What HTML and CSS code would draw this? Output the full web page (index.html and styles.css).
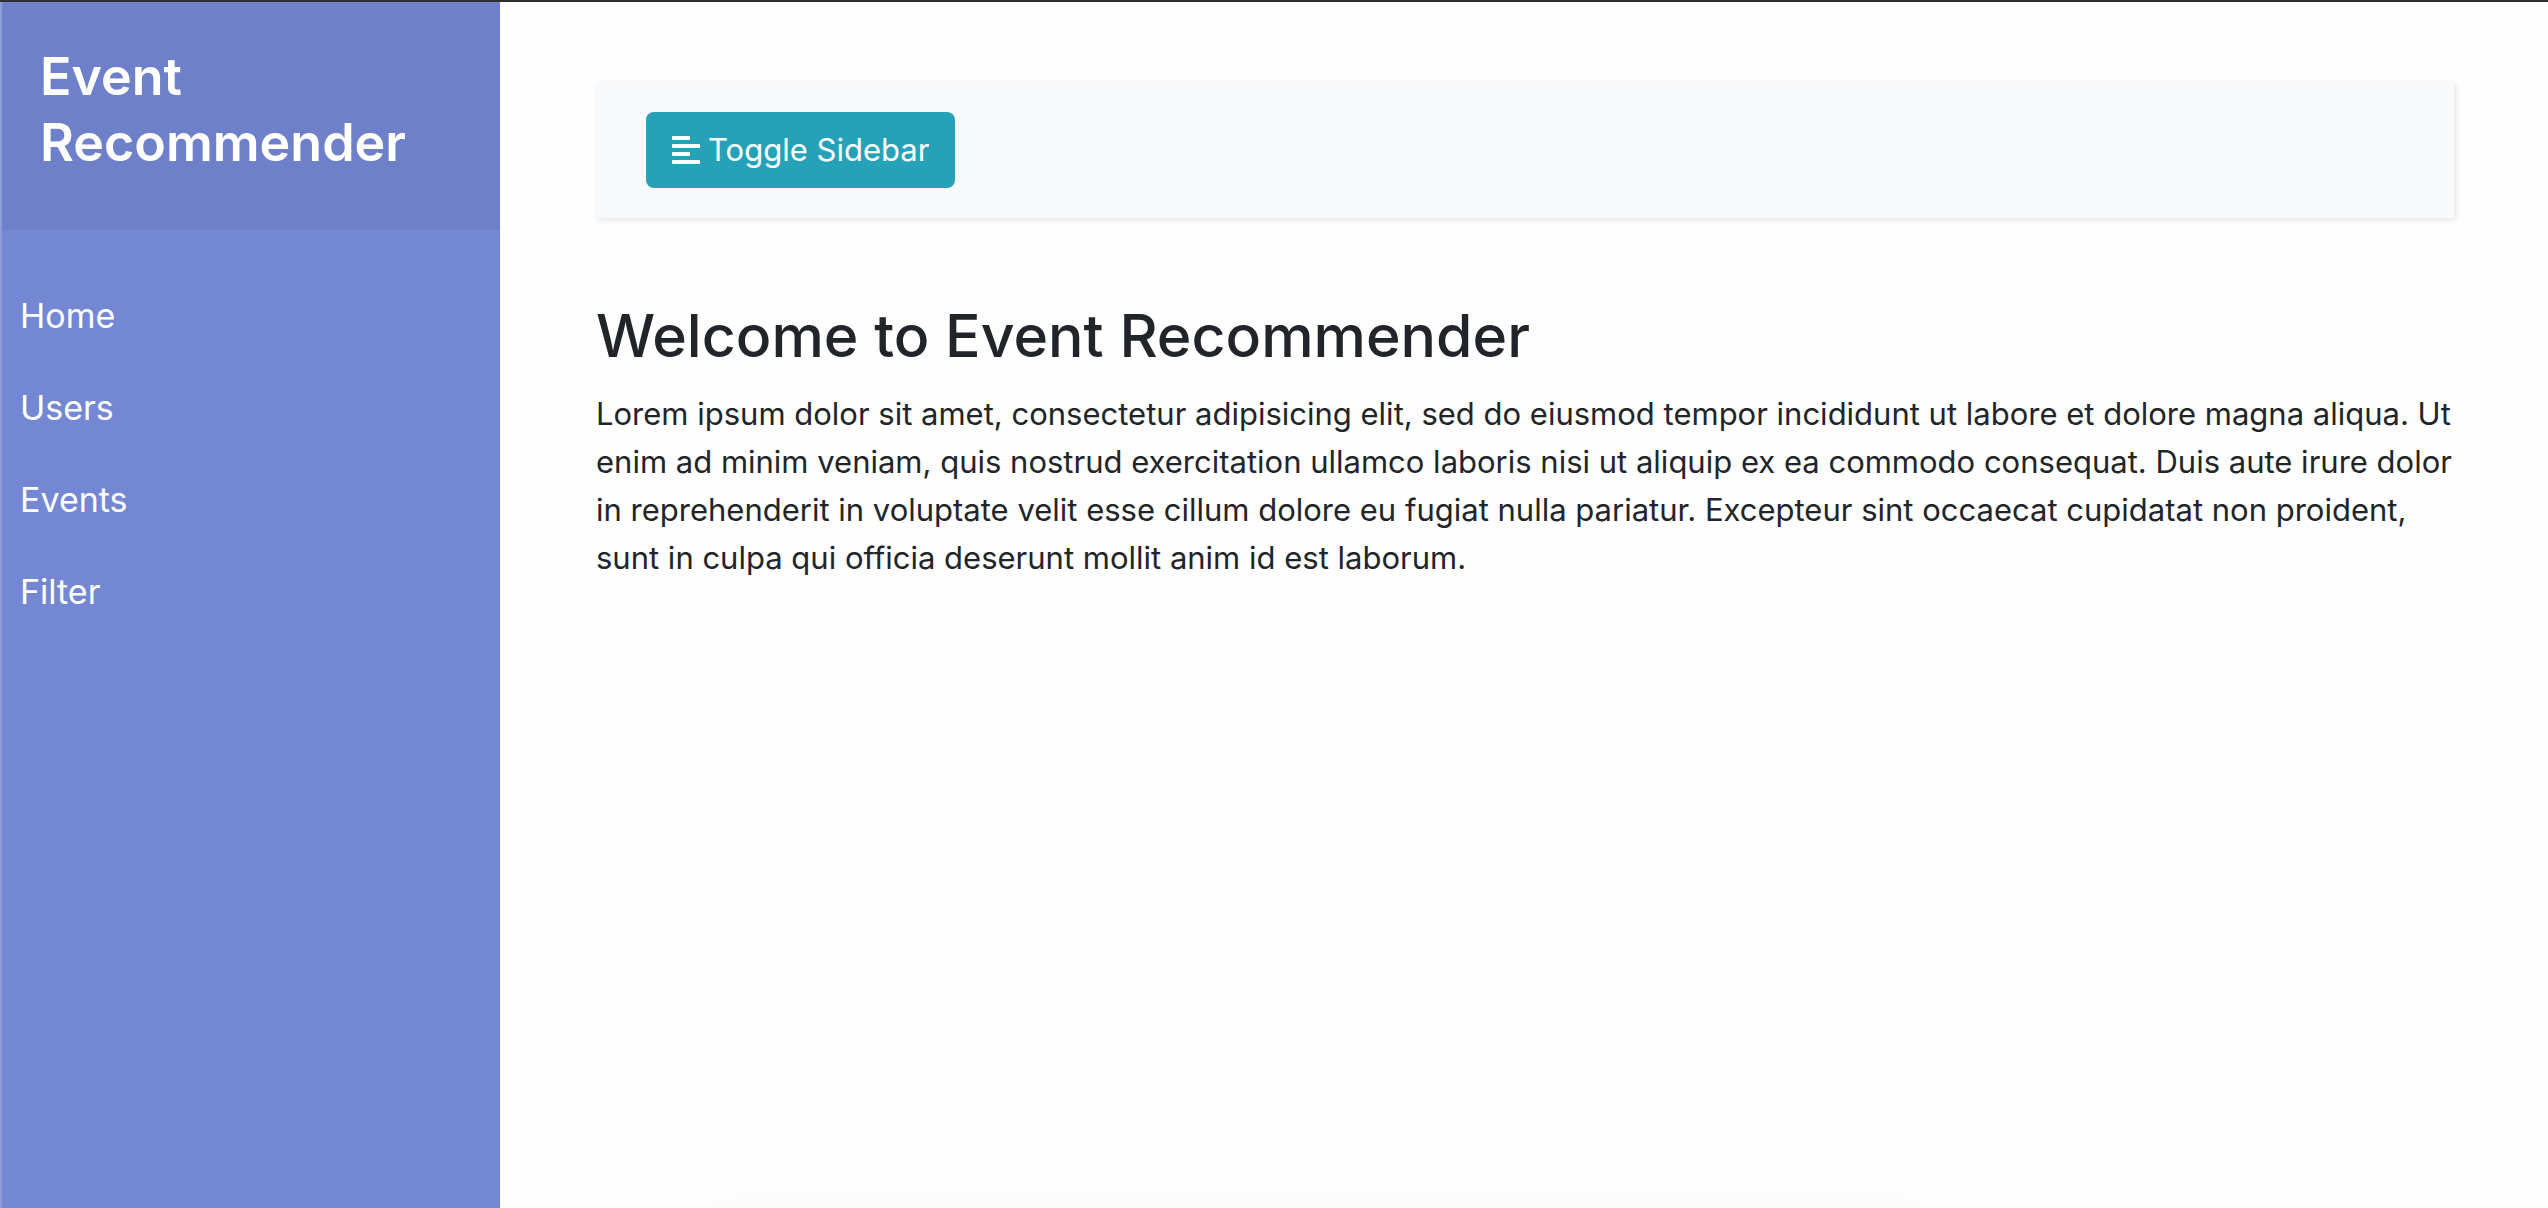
FILE: index.html
```html
<!DOCTYPE html>
<html lang="en">
<head>
  <meta charset="utf-8">
  <meta name="viewport" content="width=device-width, initial-scale=1">
  <title>Event Recommender</title>
  <link rel="stylesheet" href="styles.css">
</head>
<body>
  <div class="wrapper">
    <nav class="sidebar" id="sidebar" aria-label="Main">
      <div class="sidebar-header">
        <h3 class="sidebar-title">Event Recommender</h3>
      </div>
      <ul class="sidebar-menu">
        <li><a class="sidebar-link" href="#home">Home</a></li>
        <li><a class="sidebar-link" href="#users">Users</a></li>
        <li><a class="sidebar-link" href="#events">Events</a></li>
        <li><a class="sidebar-link" href="#filter">Filter</a></li>
      </ul>
    </nav>
    <main class="content">
      <div class="navbar">
        <button class="toggle" type="button" aria-controls="sidebar">
          <svg class="toggle-icon" viewBox="0 0 28 32" aria-hidden="true">
            <rect x="0" y="2" width="18" height="4" rx="1"/>
            <rect x="0" y="10" width="28" height="4" rx="1"/>
            <rect x="0" y="18" width="18" height="4" rx="1"/>
            <rect x="0" y="26" width="28" height="4" rx="1"/>
          </svg>
          <span>Toggle Sidebar</span>
        </button>
      </div>
      <h2 class="page-title">Welcome to Event Recommender</h2>
      <p class="intro">Lorem ipsum dolor sit amet, consectetur adipisicing elit, sed do eiusmod tempor incididunt ut labore et dolore magna aliqua. Ut enim ad minim veniam, quis nostrud exercitation ullamco laboris nisi ut aliquip ex ea commodo consequat. Duis aute irure dolor in reprehenderit in voluptate velit esse cillum dolore eu fugiat nulla pariatur. Excepteur sint occaecat cupidatat non proident, sunt in culpa qui officia deserunt mollit anim id est laborum.</p>
    </main>
  </div>
</body>
</html>
```

FILE: styles.css
```css
*,
*::before,
*::after {
  box-sizing: border-box;
}

body {
  margin: 0;
  background: #fefefe;
  color: #212529;
  font-family: Inter, "Liberation Sans", sans-serif;
  font-size: 31px;
  line-height: 48px;
}

.wrapper {
  display: flex;
  min-height: 100vh;
  border-top: 2px solid #2d2e30;
}

.sidebar {
  flex: 0 0 500px;
  border-left: 2px solid #8e9cda;
  background: #7487d2;
  color: #fff;
}

.sidebar-header {
  padding: 42px 38px 54px;
  background: #6f80ca;
}

.sidebar-title {
  margin: 0;
  font-size: 52px;
  font-weight: 600;
  line-height: 66px;
}

.sidebar-menu {
  margin: 0;
  padding: 40px 0;
  list-style: none;
}

.sidebar-link {
  display: block;
  padding: 20px 18px;
  color: #fff;
  font-size: 34px;
  line-height: 52px;
  text-decoration: none;
}

.content {
  position: relative;
  flex: 1;
  min-width: 0;
  padding: 80px 94px 80px 96px;
  overflow: hidden;
}

/* faint shade rising from the bottom edge */
.content::after {
  content: "";
  position: absolute;
  top: 100%;
  left: 10%;
  right: 30%;
  height: 20px;
  box-shadow: 0 0 40px rgba(0, 0, 0, 0.03);
}

.navbar {
  display: flex;
  align-items: center;
  margin-bottom: 80px;
  padding: 30px 50px;
  background: #f8f9fb;
  box-shadow: 2px 2px 6px rgba(0, 0, 0, 0.1);
}

.toggle {
  display: flex;
  align-items: center;
  gap: 8px;
  padding: 14px 26px;
  border: 0;
  border-radius: 8px;
  background: #25a2b8;
  color: #fff;
  font: inherit;
  cursor: pointer;
}

.toggle-icon {
  width: 28px;
  height: 32px;
  fill: currentColor;
}

.page-title {
  margin: 0 0 16px;
  font-size: 59px;
  font-weight: 500;
  line-height: 76px;
}

.intro {
  margin: 0;
}
```
